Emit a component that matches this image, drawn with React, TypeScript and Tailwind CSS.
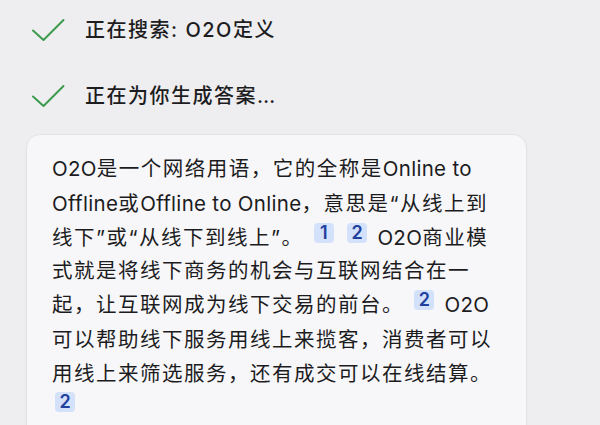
import React from "react";

const font = { fontFamily: 'Inter, "Noto Sans CJK SC", sans-serif' };

function Check() {
	return (
		<svg width="34" height="26" viewBox="0 0 34 26" fill="none" className="shrink-0">
			<path d="M2 13.5 L12.5 23 L32.5 3" stroke="#3c9a4c" strokeWidth="2" strokeLinecap="round" strokeLinejoin="round" />
		</svg>
	);
}

function Ref({ n }: { n: number }) {
	return (
		<span className="mx-[3px] inline-flex h-[20px] w-[20px] items-center justify-center rounded-[4px] bg-[#d3e1fa] align-[6px] font-['Inter'] text-[18px] font-semibold leading-none tracking-normal text-[#22409e]">
			{n}
		</span>
	);
}

// full-width punctuation takes a whole cell
function P({ c }: { c: string }) {
	return <span className="inline-block w-[22px] font-['Noto_Sans_CJK_SC']">{c}</span>;
}

// latin runs without the cjk tracking
function L({ children }: { children: React.ReactNode }) {
	return <span className="tracking-[0.3px]">{children}</span>;
}

function StatusRow({ text }: { text: string }) {
	return (
		<div className="flex h-[30px] items-center gap-[20px] pl-[31px]">
			<Check />
			<span className="text-[20px] font-medium tracking-[1.5px] text-[#1d1d1f]">{text}</span>
		</div>
	);
}

export default function App() {
	return (
		<div className="flex h-[425px] w-[600px] flex-col overflow-hidden bg-[#eeeef0]" style={font}>
			<div className="flex flex-col gap-[36px] pt-[15px]">
				<StatusRow text="正在搜索: O2O定义" />
				<StatusRow text="正在为你生成答案…" />
			</div>

			<div className="ml-[26px] mt-[23px] w-[501px] rounded-t-[14px] rounded-b-[4px] border border-[#e4e4e8] bg-[#f7f7f9] pb-[12px] pl-[25px] pt-[16px] text-[20.5px] leading-[32.5px] tracking-[1.5px] text-[#1c1c1e] shadow-[0_1px_3px_rgba(0,0,0,0.04)]">
				<div className="whitespace-nowrap">
					<L>O2O</L>是一个网络用语<P c="，" />它的全称是<L>Online to</L>
				</div>
				<div className="whitespace-nowrap">
					<L>Offline</L>或<L>Offline to Online</L>
					<P c="，" />意思是“从线上到
				</div>
				<div className="whitespace-nowrap">
					线下”或“从线下到线上”<P c="。" /> <Ref n={1} /> <Ref n={2} /> <L>O2O</L>商业模
				</div>
				<div className="whitespace-nowrap">式就是将线下商务的机会与互联网结合在一</div>
				<div className="whitespace-nowrap">
					起<P c="，" />让互联网成为线下交易的前台<P c="。" /> <Ref n={2} /> <L>O2O</L>
				</div>
				<div className="whitespace-nowrap">
					可以帮助线下服务用线上来揽客<P c="，" />消费者可以
				</div>
				<div className="whitespace-nowrap">
					用线上来筛选服务<P c="，" />还有成交可以在线结算<P c="。" />
				</div>
				<div className="whitespace-nowrap">
					<Ref n={2} />
				</div>
			</div>
		</div>
	);
}
